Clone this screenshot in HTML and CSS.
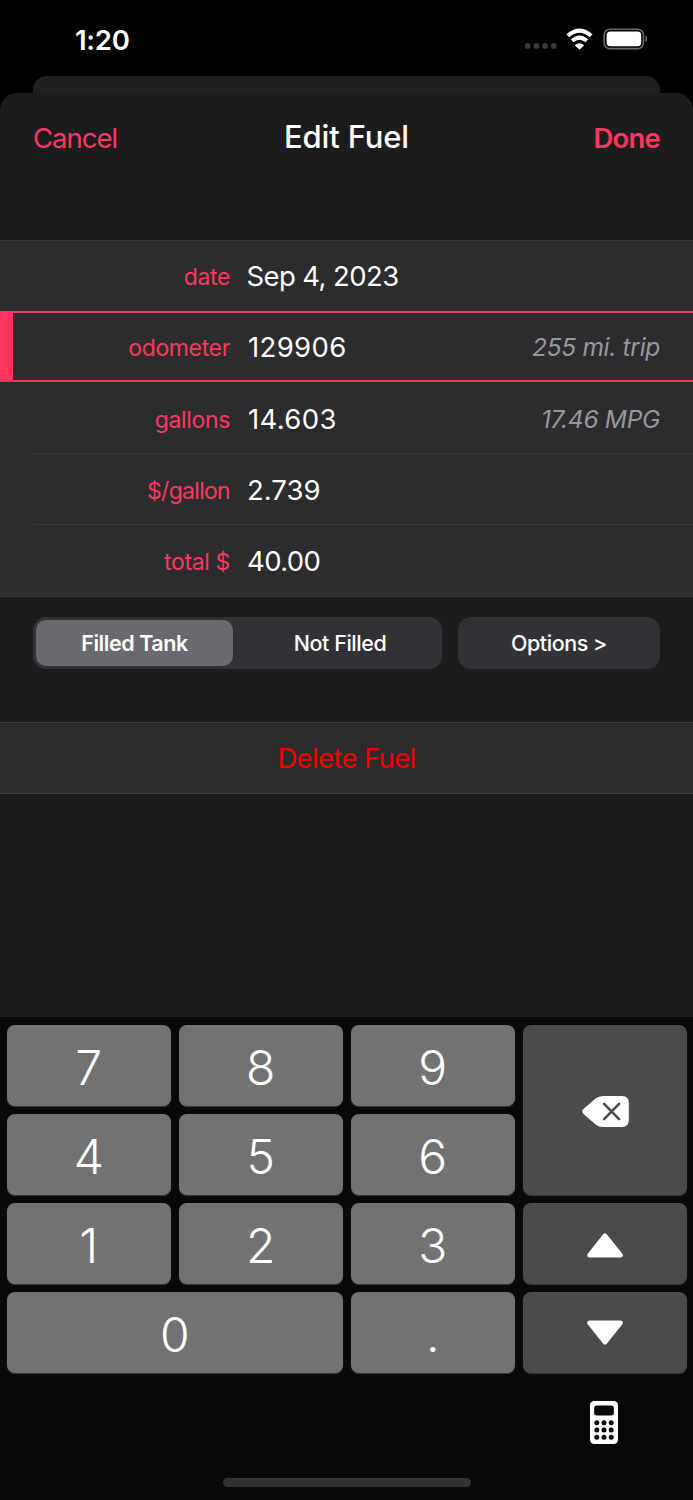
FILE: index.html
```html
<!DOCTYPE html>
<html lang="en">
<head>
    <meta charset="utf-8">
    <title>Edit Fuel</title>
    <link rel="stylesheet" href="styles.css">
</head>

<body>
    <div class="status-bar">
        <span class="time">1:20</span>
        <div class="status-icons">
            <svg class="signal" width="32" height="6" viewBox="0 0 32 6">
                <rect x="0" y="0.3" width="5.4" height="5.4" rx="1.7"/>
                <rect x="8.7" y="0.3" width="5.4" height="5.4" rx="1.7"/>
                <rect x="17.4" y="0.3" width="5.4" height="5.4" rx="1.7"/>
                <rect x="26.1" y="0.3" width="5.4" height="5.4" rx="1.7"/>
            </svg>
            <svg class="wifi" width="28" height="22" viewBox="0 0 28 22">
                <path d="M1.8 7.7 Q13.5 -2.6 25.2 7.7" stroke-width="4"/>
                <path d="M6.2 12.9 Q13.5 6.3 20.8 12.9" stroke-width="3.9"/>
                <path d="M8.8 17.2 Q13.5 13.4 18.2 17.2 L14.1 21.2 Q13.5 21.7 12.9 21.2 Z" class="dot"/>
            </svg>
            <svg class="battery" width="46" height="22" viewBox="0 0 46 22">
                <rect x="1.2" y="1.2" width="39.2" height="19.4" rx="5.6" class="shell"/>
                <rect x="3.6" y="3.5" width="34.6" height="14.8" rx="3.6" class="level"/>
                <path d="M42.3 7.5 C44.9 8.3 44.9 13.3 42.3 14.1 Z" class="tip"/>
            </svg>
        </div>
    </div>
    <div class="back-card"></div>

    <main class="sheet">
        <header>
            <a class="cancel">Cancel</a>
            <h1>Edit Fuel</h1>
            <a class="done">Done</a>
        </header>

        <ul class="fields">
            <li>
                <label>date</label>
                <span class="value date">Sep 4, 2023</span>
            </li>
            <li class="active">
                <label>odometer</label>
                <span class="value wide">129906</span>
                <em>255 mi. trip</em>
            </li>
            <li class="lower">
                <label>gallons</label>
                <span class="value wide">14.603</span>
                <em>17.46 MPG</em>
            </li>
            <li class="inset lower">
                <label class="price">$/gallon</label>
                <span class="value">2.739</span>
            </li>
            <li class="inset">
                <label>total $</label>
                <span class="value total">40.00</span>
            </li>
        </ul>

        <div class="controls">
            <div class="segmented">
                <button class="selected">Filled Tank</button>
                <button class="other">Not Filled</button>
            </div>
            <button class="options">Options &gt;</button>
        </div>

        <button class="delete">Delete Fuel</button>
    </main>

    <section class="keyboard">
        <div class="keys">
            <button>7</button>
            <button>8</button>
            <button>9</button>
            <button class="dark backspace">
                <svg width="47" height="33" viewBox="0 0 48 34">
                    <path class="fill" d="M1.6 14.2 L13.8 3.6 Q17 1 21.5 1 H41 Q48 1 48 8 V26 Q48 33 41 33 H21.5 Q17 33 13.8 30.4 L1.6 19.8 Q-1.4 17 1.6 14.2 Z"/>
                    <path class="cross" d="M22.6 9.2 L38 24.8 M38 9.2 L22.6 24.8"/>
                </svg>
            </button>
            <button>4</button>
            <button>5</button>
            <button>6</button>
            <button>1</button>
            <button>2</button>
            <button>3</button>
            <button class="dark up">
                <svg width="36" height="26" viewBox="0 0 36 26">
                    <path class="arrow" d="M18 2.7 L33.5 22.3 H2.5 Z"/>
                </svg>
            </button>
            <button class="zero">0</button>
            <button>.</button>
            <button class="dark">
                <svg width="36" height="26" viewBox="0 0 36 26">
                    <path class="arrow" d="M18 22.3 L33.5 2.7 H2.5 Z"/>
                </svg>
            </button>
        </div>
        <div class="keyboard-footer">
            <svg width="28" height="43" viewBox="0 0 28 43">
                <rect class="case" width="28" height="43" rx="4.2"/>
                <rect x="4.2" y="4.4" width="19.6" height="10.2" rx="2.4"/>
                <circle cx="6.8" cy="21.7" r="2.5"/>
                <circle cx="14" cy="21.7" r="2.5"/>
                <circle cx="21.2" cy="21.7" r="2.5"/>
                <circle cx="6.8" cy="29" r="2.5"/>
                <circle cx="14" cy="29" r="2.5"/>
                <circle cx="21.2" cy="29" r="2.5"/>
                <circle cx="6.8" cy="36.3" r="2.5"/>
                <circle cx="14" cy="36.3" r="2.5"/>
                <circle cx="21.2" cy="36.3" r="2.5"/>
            </svg>
        </div>
        <div class="home-bar"></div>
    </section>
</body>

</html>
```
FILE: styles.css
```css
* {
    box-sizing: border-box;
}
body {
    margin: 0;
    width: 693px;
    height: 1500px;
    display: flex;
    flex-direction: column;
    background: #000;
    color: #fff;
    font-family: Inter, "Liberation Sans", sans-serif;
    overflow: hidden;
}
button {
    margin: 0;
    padding: 0;
    border: none;
    color: #fff;
    font-family: inherit;
}

/* status bar */
.status-bar {
    height: 76px;
    padding: 0 44px 0 75px;
    display: flex;
    justify-content: space-between;
    align-items: flex-start;
}
.time {
    margin-top: 22px;
    line-height: 36px;
    font-size: 27.5px;
    font-weight: 600;
    letter-spacing: -0.3px;
}
.status-icons {
    margin-top: 28px;
    display: flex;
    align-items: flex-start;
}
.signal {
    margin: 15px 9px 0 0;
    fill: #3a3a3a;
}
.wifi {
    margin-right: 9px;
    fill: none;
    stroke: #fff;
}
.wifi .dot {
    fill: #fff;
    stroke: none;
}
.battery .shell {
    fill: none;
    stroke: #6b6b6b;
    stroke-width: 1.6;
}
.battery .level {
    fill: #fff;
}
.battery .tip {
    fill: #6b6b6b;
}

/* sheet */
.back-card {
    height: 17px;
    margin: 0 33px;
    border-radius: 14px 14px 0 0;
    background: #202021;
}
.sheet {
    height: 924px;
    border-radius: 17px 17px 0 0;
    background: #1c1c1e;
}
header {
    height: 147px;
    padding: 26px 33px 0;
    display: grid;
    grid-template-columns: 1fr auto 1fr;
    align-items: start;
    line-height: 36px;
    font-size: 27.5px;
}
header a {
    margin-top: 1px;
    color: #ff375f;
    letter-spacing: -1px;
}
h1 {
    margin: 0;
    font-size: 31px;
    font-weight: 500;
    letter-spacing: -0.15px;
}
header .done {
    font-weight: 600;
    text-align: right;
    letter-spacing: -0.8px;
}

/* form rows */
.fields {
    height: 357px;
    margin: 0;
    padding: 0;
    list-style: none;
    display: grid;
    grid-template-rows: 70px 71px 71px 71px 1fr;
    background: #2c2c2e;
    border-top: 1px solid #38383a;
    border-bottom: 1px solid #38383a;
}
.fields li {
    display: flex;
    align-items: center;
    padding-right: 33px;
}
.fields .active {
    padding-top: 1px;
    border: solid #f4365c;
    border-width: 2px 0;
    border-left: 13px solid #ff375f;
}
.fields .active label {
    width: 217px;
}
.fields .lower {
    padding-top: 2px;
}
.fields .inset {
    margin-left: 33px;
    border-top: 1px solid #39393b;
}
.fields .inset label {
    width: 197px;
}
.fields label {
    width: 230px;
    padding-top: 2px;
    text-align: right;
    color: #ff375f;
    font-size: 23px;
    letter-spacing: -0.35px;
}
.fields .price {
    letter-spacing: -0.7px;
}
.value {
    margin-left: 17px;
    font-size: 27.5px;
}
.value.date {
    margin-left: 16.5px;
    letter-spacing: -0.6px;
}
.value.wide {
    margin-left: 18px;
    letter-spacing: 0.35px;
}
.value.total {
    letter-spacing: -0.6px;
}
.fields em {
    margin-left: auto;
    color: #98989f;
    font-size: 24.5px;
    letter-spacing: -0.3px;
}

.controls {
    height: 125px;
    padding: 20px 33px 0;
    display: flex;
    gap: 16px;
}
.controls button {
    font-size: 21.5px;
    font-weight: 500;
    letter-spacing: -0.45px;
}
.segmented {
    width: 409px;
    height: 52px;
    padding: 3px;
    display: flex;
    border-radius: 13px;
    background: #323236;
}
.segmented .other {
    flex: 1;
    padding-left: 8px;
    background: none;
}
.segmented .selected {
    flex: 0 0 197px;
    border-radius: 10px;
    background: #69696f;
    font-weight: 600;
}
.controls .options {
    width: 202px;
    height: 52px;
    border-radius: 13px;
    background: #323236;
}
.delete {
    display: block;
    width: 100%;
    height: 72px;
    border-top: 1px solid #38383a;
    border-bottom: 1px solid #38383a;
    background: #2c2c2e;
    color: #f80000;
    font-size: 27.5px;
    letter-spacing: -0.65px;
}

/* keyboard */
.keyboard {
    flex: 1;
    padding: 8px 6.5px 0 7px;
    background: #090909;
}
.keys {
    height: 348px;
    display: grid;
    grid-template-columns: repeat(4, 1fr);
    grid-template-rows: repeat(4, 1fr);
    gap: 8px 8.5px;
}
.keys button {
    padding-top: 5px;
    border-radius: 8px;
    background: #727272;
    box-shadow: 0 1px 1px #3a3a3a;
    font-size: 48px;
    font-weight: 300;
    line-height: 76px;
}
.keys .dark {
    padding-top: 0;
    display: flex;
    justify-content: center;
    align-items: center;
    background: #4b4b4b;
}
.keys .backspace {
    grid-row: span 2;
    padding: 2px 0 0 2px;
}
.keys .up {
    padding-top: 4px;
}
.keys .zero {
    grid-column: span 2;
}
.backspace .fill {
    fill: #fff;
}
.backspace .cross {
    stroke: #4b4b4b;
    stroke-width: 2.6;
    stroke-linecap: round;
}
.arrow {
    fill: #fff;
    stroke: #fff;
    stroke-width: 4.6;
    stroke-linejoin: round;
}
.keyboard-footer {
    height: 105px;
    padding: 28px 69px 0 0;
    display: flex;
    justify-content: flex-end;
    align-items: flex-start;
    fill: #090909;
}
.keyboard-footer .case {
    fill: #fff;
}
.home-bar {
    width: 248px;
    height: 9px;
    margin: 0 auto;
    border-radius: 5px;
    background: #333;
}
```
